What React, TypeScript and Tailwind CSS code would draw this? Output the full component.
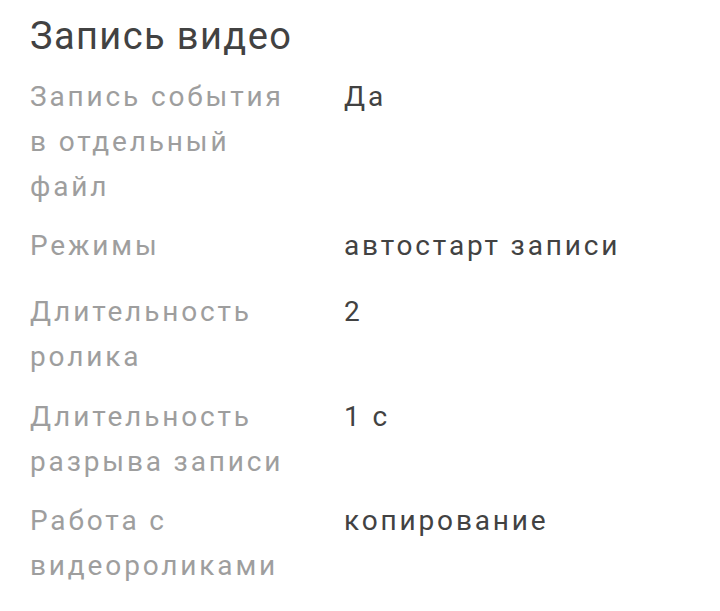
import React from "react";

type Row = { label: string[]; value: string; mt: string };

const rows: Row[] = [
  { label: ["Запись события", "в отдельный", "файл"], value: "Да", mt: "mt-0" },
  { label: ["Режимы"], value: "автостарт записи", mt: "mt-[14px]" },
  { label: ["Длительность", "ролика"], value: "2", mt: "mt-[21px]" },
  { label: ["Длительность", "разрыва записи"], value: "1 с", mt: "mt-[15px]" },
  { label: ["Работа с", "видеороликами"], value: "копирование", mt: "mt-[14px]" },
];

export default function App() {
  return (
    <div className="w-[720px] h-[611px] bg-white overflow-hidden pl-[30px] pt-[14px] font-['Roboto',sans-serif]">
      <h1 className="text-[38px] leading-[44px] tracking-[1.4px] text-[#424242] font-normal">Запись видео</h1>
      <div className="mt-[16px] flex flex-col">
        {rows.map((r, i) => (
          <div key={i} className={`flex ${r.mt}`}>
            <div className="w-[314px] shrink-0 text-[28px] leading-[45px] tracking-[2.85px] text-[#9e9e9e]">
              {r.label.map((l, j) => (
                <div key={j}>{l}</div>
              ))}
            </div>
            <div className="text-[28px] leading-[45px] tracking-[2.85px] text-[#424242]">{r.value}</div>
          </div>
        ))}
      </div>
    </div>
  );
}
